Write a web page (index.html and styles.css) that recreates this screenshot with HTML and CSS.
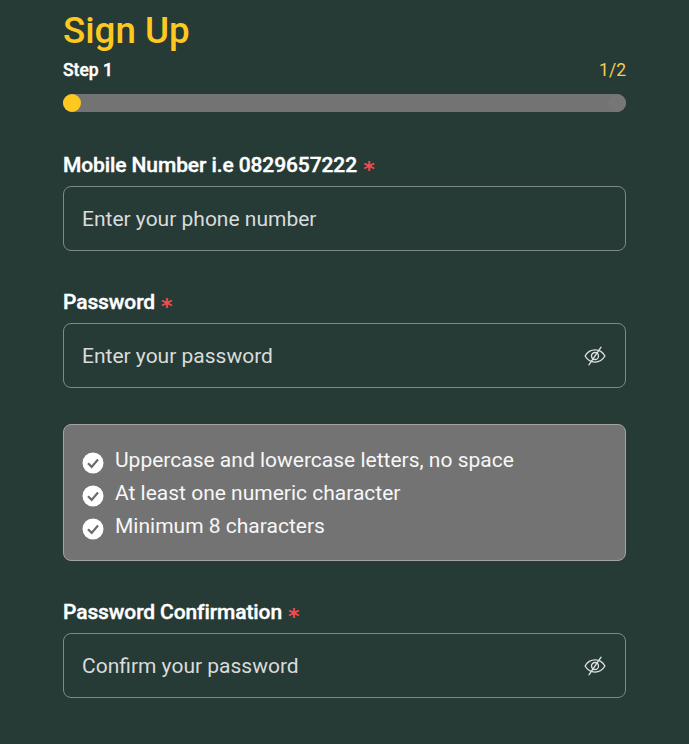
FILE: index.html
```html
<!DOCTYPE html>
<html lang="en">
<head>
    <meta charset="UTF-8">
    <meta name="viewport" content="width=device-width, initial-scale=1.0">
    <title>Sign Up</title>
    <link rel="stylesheet" href="styles.css">
</head>
<body>

<svg class="icon-defs" width="0" height="0" aria-hidden="true">
    <symbol id="eye-off" viewBox="0 0 20 20">
        <path d="M1 10c2-3.500 5.200-5.500 9-5.500s7 2 9 5.500c-2 3.500-5.200 5.500-9 5.500S3 13.500 1 10z" fill="none" stroke="currentColor" stroke-width="1.200"/>
        <circle cx="10" cy="10" r="3.200" fill="none" stroke="currentColor" stroke-width="1.200"/>
        <path d="M15.500 2 4.500 18" fill="none" stroke="currentColor" stroke-width="1.200" stroke-linecap="round"/>
    </symbol>
    <symbol id="check" viewBox="0 0 22 22">
        <circle cx="11" cy="11" r="10.500" fill="#fff"/>
        <path d="M6 11.200 9.700 14.900 16 7.500" fill="none" stroke="#6b6b6b" stroke-width="2.200"/>
    </symbol>
</svg>

<main class="signup">
    <h1 class="title">Sign Up</h1>

    <div class="step-row">
        <span class="step-name">Step 1</span>
        <span class="step-count">1/2</span>
    </div>
    <div class="progress">
        <span class="progress-dot"></span>
        <span class="progress-end"></span>
    </div>

    <div class="field first">
        <label class="field-label">Mobile Number i.e 0829657222 <span class="required">*</span></label>
        <div class="input-box">
            <span class="placeholder">Enter your phone number</span>
        </div>
    </div>

    <div class="field">
        <label class="field-label">Password <span class="required">*</span></label>
        <div class="input-box">
            <span class="placeholder">Enter your password</span>
            <svg class="eye"><use href="#eye-off"/></svg>
        </div>
    </div>

    <!-- Password rules -->
    <ul class="rules">
        <li><svg class="tick"><use href="#check"/></svg>Uppercase and lowercase letters, no space</li>
        <li><svg class="tick"><use href="#check"/></svg>At least one numeric character</li>
        <li><svg class="tick"><use href="#check"/></svg>Minimum 8 characters</li>
    </ul>

    <div class="field">
        <label class="field-label">Password Confirmation <span class="required">*</span></label>
        <div class="input-box">
            <span class="placeholder">Confirm your password</span>
            <svg class="eye"><use href="#eye-off"/></svg>
        </div>
    </div>
</main>

</body>
</html>
```

FILE: styles.css
```css
/* General Styles */
body {
    font-family: Roboto, "Liberation Sans", sans-serif;
    margin: 0;
    padding: 0;
    background-color: #263a36;
    color: #fff;
    height: 744px;
    overflow: hidden;
}

.icon-defs {
    position: absolute;
}

.signup {
    width: 563px;
    margin-left: 63px;
}

/* Heading */
.title {
    margin: 0;
    padding-top: 10px;
    font-size: 36.750px;
    font-weight: 500;
    line-height: 42px;
    color: #ffc81f;
}

/* Step progress */
.step-row {
    display: flex;
    justify-content: space-between;
    align-items: center;
    margin-top: 8px;
    height: 20px;
}

.step-name {
    font-size: 17.500px;
    font-weight: 500;
    -webkit-text-stroke: 0.4px #fff;
}

.step-count {
    font-size: 17.500px;
    color: #f5cd55;
}

.progress {
    display: flex;
    justify-content: space-between;
    margin-top: 14px;
    height: 18px;
    border-radius: 9px;
    background-color: #737373;
}

.progress-dot,
.progress-end {
    width: 18px;
    height: 18px;
    border-radius: 50%;
    background-color: #ffc81f;
}

.progress-end {
    background-color: #767676;
}

/* Form fields */
.field {
    margin-top: 39px;
}

.field.first {
    margin-top: 41px;
}

.field-label {
    display: block;
    font-size: 21px;
    font-weight: 500;
    line-height: 25px;
    letter-spacing: -0.1px;
    -webkit-text-stroke: 0.4px #fff;
}

.required {
    font-family: "DejaVu Sans", sans-serif;
    font-size: 22px;
    font-weight: 700;
    line-height: 0;
    color: #f04b4f;
    -webkit-text-stroke: 0;
    vertical-align: -5px;
    margin-left: 1px;
}

.input-box {
    display: flex;
    justify-content: space-between;
    align-items: center;
    box-sizing: border-box;
    height: 65px;
    margin-top: 8px;
    padding: 0 19px 0 18px;
    border: 1px solid #7f8a87;
    border-radius: 8px;
}

.placeholder {
    font-size: 21px;
    color: #d9dcdb;
}

.eye {
    width: 22px;
    height: 22px;
    color: #dfe2e1;
}

/* Password rules */
.rules {
    box-sizing: border-box;
    height: 137px;
    margin: 36px 0 0;
    padding: 18px 18px;
    list-style: none;
    background-color: #737373;
    border: 1px solid #a3a3a3;
    border-radius: 8px;
}

.rules li {
    display: flex;
    align-items: center;
    height: 33px;
    font-size: 21px;
    color: #f7f7f7;
}

.tick {
    flex-shrink: 0;
    width: 22px;
    height: 22px;
    margin: 6px 11px 0 0;
}
```
